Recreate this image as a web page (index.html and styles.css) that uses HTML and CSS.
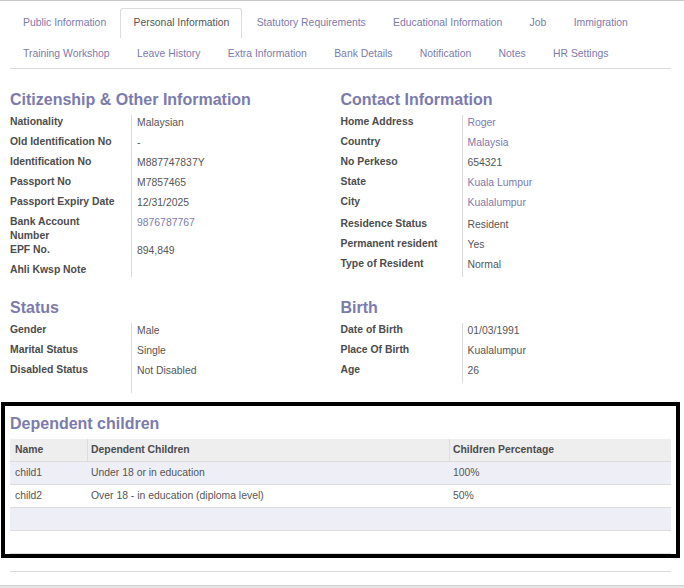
FILE: index.html
```html
<!DOCTYPE html>
<html lang="en">
<head>
<meta charset="utf-8">
<title>Personal Information</title>
<link rel="stylesheet" href="styles.css">
</head>
<body>
<div class="sheet">
  <ul class="tabs">
    <li><a>Public Information</a></li>
    <li class="active"><a>Personal Information</a></li>
    <li><a>Statutory Requirements</a></li>
    <li><a>Educational Information</a></li>
    <li><a>Job</a></li>
    <li><a>Immigration</a></li>
    <li><a>Training Workshop</a></li>
    <li><a>Leave History</a></li>
    <li><a>Extra Information</a></li>
    <li><a>Bank Details</a></li>
    <li><a>Notification</a></li>
    <li><a>Notes</a></li>
    <li><a>HR Settings</a></li>
  </ul>

  <div class="groups">
    <div class="group">
      <h2>Citizenship &amp; Other Information</h2>
      <div class="fields">
        <div class="label">Nationality</div><div class="value">Malaysian</div>
        <div class="label">Old Identification No</div><div class="value">-</div>
        <div class="label">Identification No</div><div class="value">M887747837Y</div>
        <div class="label">Passport No</div><div class="value">M7857465</div>
        <div class="label">Passport Expiry Date</div><div class="value">12/31/2025</div>
        <div class="label">Bank Account Number</div><div class="value link">9876787767</div>
        <div class="label">EPF No.</div><div class="value">894,849</div>
        <div class="label">Ahli Kwsp Note</div><div class="value empty"></div>
      </div>
    </div>
    <div class="group">
      <h2>Contact Information</h2>
      <div class="fields">
        <div class="label">Home Address</div><div class="value link">Roger</div>
        <div class="label">Country</div><div class="value link">Malaysia</div>
        <div class="label">No Perkeso</div><div class="value">654321</div>
        <div class="label">State</div><div class="value link">Kuala Lumpur</div>
        <div class="label">City</div><div class="value link tall">Kualalumpur</div>
        <div class="label">Residence Status</div><div class="value">Resident</div>
        <div class="label">Permanent resident</div><div class="value">Yes</div>
        <div class="label">Type of Resident</div><div class="value">Normal</div>
      </div>
    </div>
    <div class="group">
      <h2>Status</h2>
      <div class="fields">
        <div class="label">Gender</div><div class="value">Male</div>
        <div class="label">Marital Status</div><div class="value">Single</div>
        <div class="label">Disabled Status</div><div class="value">Not Disabled</div>
        <div class="label"></div><div class="value spacer"></div>
      </div>
    </div>
    <div class="group">
      <h2>Birth</h2>
      <div class="fields">
        <div class="label">Date of Birth</div><div class="value">01/03/1991</div>
        <div class="label">Place Of Birth</div><div class="value">Kualalumpur</div>
        <div class="label">Age</div><div class="value">26</div>
      </div>
    </div>
  </div>

  <section class="dependents">
    <h2>Dependent children</h2>
    <table class="list">
      <colgroup>
        <col class="c-name"><col class="c-dep"><col>
      </colgroup>
      <thead>
        <tr><th>Name</th><th>Dependent Children</th><th>Children Percentage</th></tr>
      </thead>
      <tbody>
        <tr class="odd"><td>child1</td><td>Under 18 or in education</td><td>100%</td></tr>
        <tr><td>child2</td><td>Over 18 - in education (diploma level)</td><td>50%</td></tr>
        <tr class="odd"><td></td><td></td><td></td></tr>
        <tr><td></td><td></td><td></td></tr>
      </tbody>
    </table>
  </section>

  <div class="divider"></div>
</div>
</body>
</html>
```

FILE: styles.css
```css
html {
  background: #e6e6e6;
}
body {
  margin: 0;
  font-family: "Liberation Sans", Arial, sans-serif;
  font-size: 10.4px;
  color: #4c4c4c;
}
.sheet {
  background: #fff;
  border-top: 1px solid #c8c8c8;
  border-bottom: 1px solid #d0d0d0;
  padding: 0 13px 13px 10px;
}

/* tabs */
.tabs {
  list-style: none;
  margin: 7px 0 0;
  padding: 0;
  display: flex;
  flex-wrap: wrap;
  row-gap: 1px;
  border-bottom: 1px solid #dcdcdc;
}
.tabs li {
  margin-right: 1.3px;
}
.tabs a {
  display: block;
  padding: 7px 12px;
  line-height: 14px;
  border: 1px solid transparent;
  border-bottom: 0;
  color: #7c7bad;
  white-space: nowrap;
}
.tabs li.active a {
  border-color: #dcdcdc;
  border-radius: 3px 3px 0 0;
  color: #555;
  padding-bottom: 8px;
  background: #fff;
}

/* groups */
.groups {
  display: grid;
  grid-template-columns: 1fr 1fr;
  row-gap: 22px;
  margin-top: 22px;
}
h2 {
  margin: 0 0 6px;
  font-size: 16px;
  line-height: 18px;
  font-weight: bold;
  color: #7c7bad;
}
.fields {
  display: grid;
  grid-template-columns: 121px 1fr;
}
.label {
  font-weight: bold;
  line-height: 14px;
  padding-right: 10px;
  color: #4c4c4c;
}
.value {
  border-left: 1px solid #dadada;
  padding: 1px 0 5px 5px;
  line-height: 14px;
  color: #555;
}
.value.link {
  color: #7c7bad;
}
.value.tall {
  padding-bottom: 7px;
}
.value.empty {
  padding: 0;
}
.value.spacer {
  padding: 0;
  height: 10px;
}

/* dependents */
.dependents {
  margin: 9px -9px 0;
  border: 4px solid #000;
  padding: 9px 5px 0 5px;
}
.list {
  width: 100%;
  border-collapse: separate;
  border-spacing: 0;
  table-layout: fixed;
  border-bottom: 1px solid #dcdcdc;
}
.c-name { width: 77px; }
.c-dep { width: 362px; }
.list th {
  background: #eeeeee;
  text-align: left;
  font-weight: bold;
  color: #4c4c4c;
  line-height: 14px;
  padding: 4px 3px;
}
.list th + th {
  border-left: 1px solid #dcdcdc;
}
.list th:first-child,
.list td:first-child {
  padding-left: 5px;
}
.list tbody tr {
  height: 23px;
}
.list td {
  border-top: 1px solid #dcdcdc;
  line-height: 14px;
  padding: 4px 4px;
  color: #555;
}
.list tr.odd td {
  background: #eeeef6;
}
.divider {
  margin-top: 13px;
  border-top: 1px solid #dcdcdc;
}
```
